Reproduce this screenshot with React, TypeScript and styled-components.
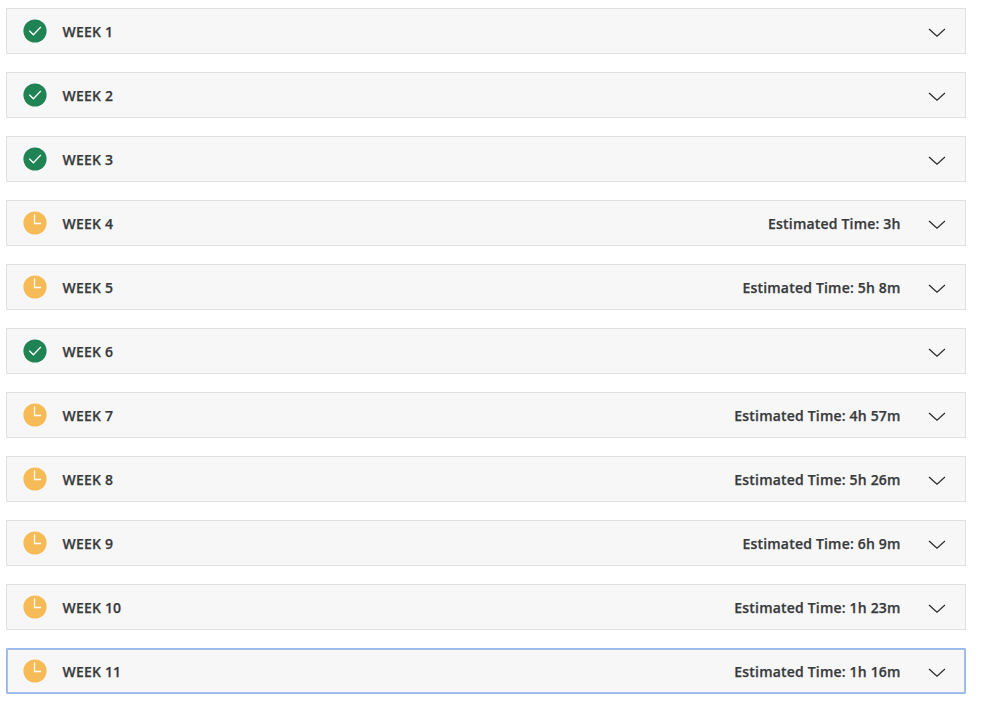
import React from "react";
import styled, { createGlobalStyle } from "styled-components";

const GlobalStyle = createGlobalStyle`
  body { margin: 0; background: #fff; font-family: "Open Sans", sans-serif; }
`;

const WeekList = styled.main`
  display: flex;
  flex-direction: column;
  gap: 18px;
  width: 960px;
  padding: 8px 0 0 6px;
`;

const WeekRow = styled.section<{ $focused: boolean }>`
  box-sizing: border-box;
  display: flex;
  align-items: center;
  height: 46px;
  padding: 2px 20px 0 16px;
  background: #f7f7f7;
  border: 1px solid ${(p) => (p.$focused ? "#98b8e8" : "#e1e1e1")};
  border-radius: ${(p) => (p.$focused ? "1px" : "0")};
  box-shadow: ${(p) => (p.$focused ? "inset 0 0 0 1px #a5c0eb" : "none")};
  color: #373a3c;
  font-size: 14px;
  font-weight: 600;
  letter-spacing: 0.19px;
  -webkit-text-stroke: 0.25px #373a3c;
  line-height: 20px;
`;

const StatusIcon = styled.svg`
  width: 24px;
  height: 24px;
  margin-right: 15.5px;
  margin-top: -2px;
`;

const Title = styled.span`
  flex: 1;
`;

const Estimate = styled.span`
  margin-right: 27.4px;
`;

const Chevron = styled.svg`
  width: 17px;
  height: 10px;
  margin-top: 2px;
`;

interface Week {
  number: number;
  time?: string;
}

const weeks: Week[] = [
  { number: 1 },
  { number: 2 },
  { number: 3 },
  { number: 4, time: "3h" },
  { number: 5, time: "5h 8m" },
  { number: 6 },
  { number: 7, time: "4h 57m" },
  { number: 8, time: "5h 26m" },
  { number: 9, time: "6h 9m" },
  { number: 10, time: "1h 23m" },
  { number: 11, time: "1h 16m" },
];

function Status({ done }: { done: boolean }) {
  return (
    <StatusIcon viewBox="0 0 24 24" fill="none">
      <circle cx="12" cy="12" r="11.6" fill={done ? "#1f8354" : "#f7bb56"} />
      <path d={done ? "M6.3 11.8 10.4 15.8 17.8 8" : "M11.5 3.5V12.5H18"} stroke="#fff" strokeWidth="1.3" />
    </StatusIcon>
  );
}

export default function App() {
  return (
    <>
      <GlobalStyle />
      <WeekList>
        {weeks.map(({ number, time }) => (
          <WeekRow key={number} $focused={number === 11}>
            <Status done={!time} />
            <Title>WEEK {number}</Title>
            {time && <Estimate>Estimated Time: {time}</Estimate>}
            <Chevron viewBox="0 0 17 10" fill="none">
              <path d="M1 1 9 8.2 17 1" stroke="#222" strokeWidth="1.1" />
            </Chevron>
          </WeekRow>
        ))}
      </WeekList>
    </>
  );
}
